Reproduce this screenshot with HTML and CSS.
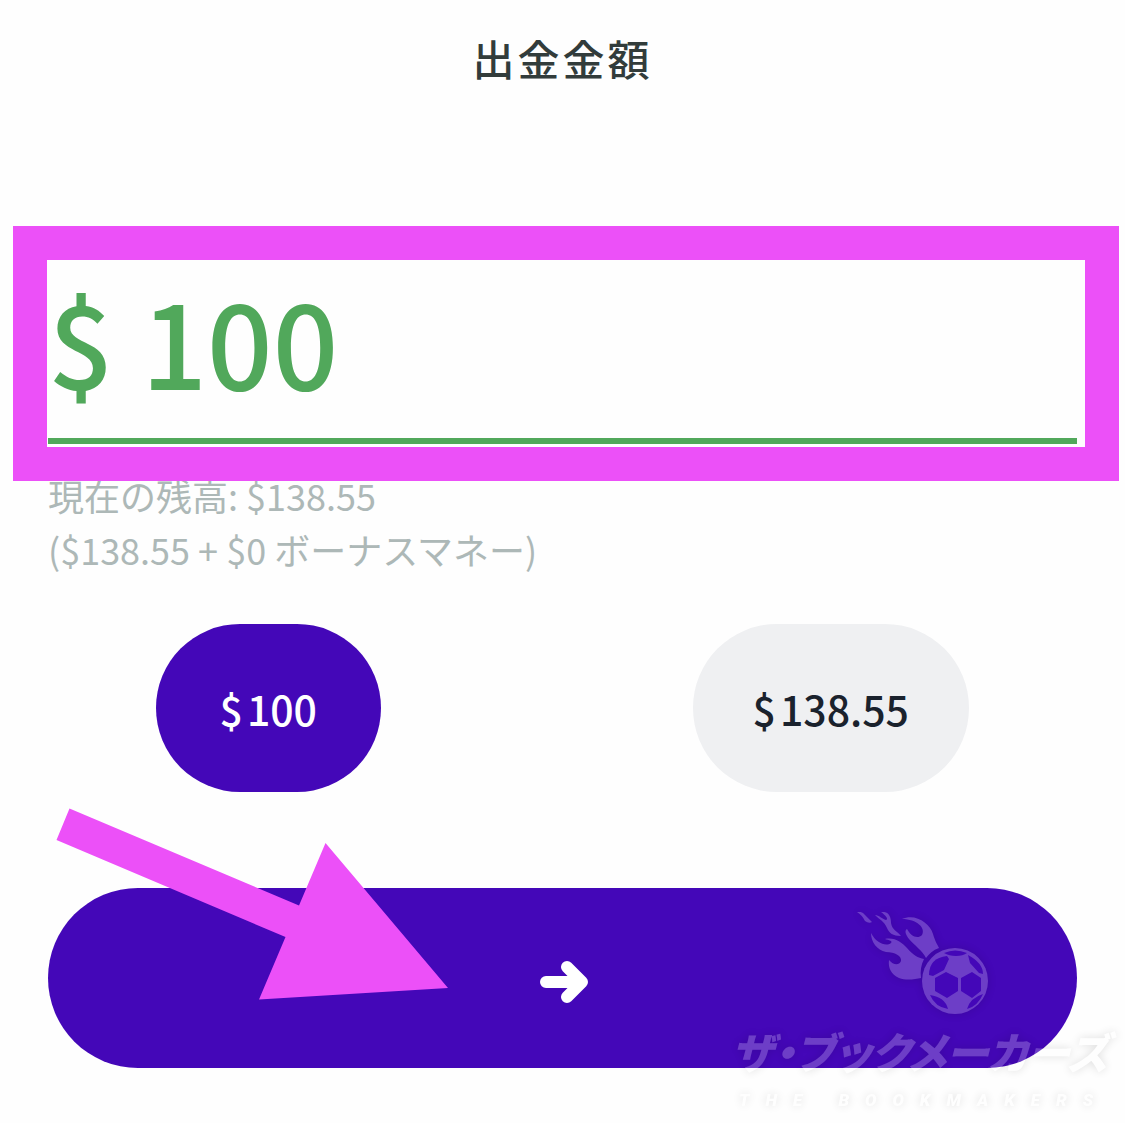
FILE: index.html
```html
<!DOCTYPE html>
<html lang="ja">
<head>
<meta charset="utf-8">
<meta name="viewport" content="width=device-width, initial-scale=1">
<title>出金金額</title>
<link rel="stylesheet" href="styles.css">
</head>
<body>
<main class="page">
  <h1 class="title">出金金額</h1>
  <form class="form">
    <div class="amount">
      <label class="currency" for="amount">$</label>
      <input class="amount-input" id="amount" type="text" inputmode="decimal" value="100" autocomplete="off">
      <div class="highlight"></div>
    </div>
    <p class="balance">現在の残高: $138.55<br>($138.55 + $0 ボーナスマネー)</p>
    <div class="presets">
      <button class="chip chip-active" type="button"><span>$</span><span>100</span></button>
      <button class="chip" type="button"><span>$</span><span>138.55</span></button>
    </div>
    <div class="submit-row">
      <button class="submit" type="submit" aria-label="次へ">
        <svg width="48" height="42" viewBox="0 0 48 42" fill="none" stroke="currentColor" stroke-width="12" stroke-linecap="round" stroke-linejoin="round"><path d="M6 21H42M27 6L42 21L27 36"/></svg>
      </button>
      <svg class="pointer" width="392" height="192" viewBox="0 0 392 192" aria-hidden="true"><path fill="#ec50f8" d="M13.500 .500L243 97.500L269.500 35L392 180L203 191.500L229.500 129L.500 32Z"/></svg>
      <div class="watermark">
        <svg class="watermark-mark" width="134" height="104" viewBox="0 0 134 104" aria-hidden="true">
          <g fill="#fff">
            <path d="M0 0Q5 -1 8 3L15 10Q12 12 8 9Q5 3 0 0Z"/>
            <path d="M18 3C22 3 25 7 29 8C32 7 28 3 24 0C32 -1 34 5 34 11C35 18 40 19 44 24C36 24 32 21 30 16C27 9 23 8 18 3Z"/>
            <path d="M45 7C58 1 73 11 76 22C78 29 80 32 82 36C76 38 72 42 69 46C66 39 57 33 52 27C49 23 47 19 50 17C53 23 60 28 65 23C69 16 60 7 45 7Z"/>
            <path d="M14 21C19 31 29 35 34 31C36 29 32 28 28 27C38 25 45 31 50 36C56 43 61 46 67 47C64 53 63 59 64 66C58 67 50 69 42 66C34 62 31 56 32 48C36 53 42 54 44 49C45 44 38 40 29 40C20 38 14 30 14 21Z"/>
          </g>
          <g transform="translate(98 69)">
            <circle r="33" fill="#fff"/>
            <g fill="#4407b8">
              <path d="M-11 -28Q0 -33 12 -28Q8 -25 1 -25Q-6 -25 -11 -28Z"/>
              <path d="M-26 -6Q-26 -23 -8 -25L-6 -22L-11 -11L-22 -5Z"/>
              <path d="M13 -26Q28 -18 28 -7L24 -8L15 -18Z"/>
              <path d="M-20 -3L-9 -9L3 -3V10L-8 17L-20 10Z"/>
              <path d="M6 -3L17 -9L26 -3V10L17 17L6 10Z"/>
              <path d="M-25 14Q-10 16 -7 28Q-20 26 -25 14Z"/>
              <path d="M28 13Q23 25 12 28Q15 17 28 13Z"/>
            </g>
          </g>
        </svg>
        <span class="watermark-name">ザ・ブックメーカーズ</span>
        <span class="watermark-sub">THE BOOKMAKERS</span>
      </div>
    </div>
  </form>
</main>
</body>
</html>
```
FILE: styles.css
```css
* {
  box-sizing: border-box;
}

body {
  margin: 0;
  background: #fefefe;
  color: #323c3b;
  font-family: "Noto Sans CJK JP", "Noto Sans", sans-serif;
}

.page {
  overflow: hidden;
  padding-bottom: 55px;
}

.title {
  margin: 0;
  padding: 28px 48px 0;
  font-size: 42px;
  line-height: 60px;
  font-weight: 500;
  letter-spacing: 3px;
  text-align: center;
}

.amount {
  position: relative;
  display: flex;
  gap: 28px;
  height: 184px;
  margin: 172px 48px 0;
  border-bottom: 6px solid #51a85b;
  color: #51a85b;
  font-size: 115px;
  line-height: 160px;
  font-weight: 500;
}

.amount-input {
  flex: 1;
  min-width: 0;
  height: 160px;
  padding: 0;
  border: 0;
  outline: 0;
  background: transparent;
  color: inherit;
  font: inherit;
}

.highlight {
  position: absolute;
  inset: -34px -42px -43px -35px;
  border: 34px solid #ec50f8;
  pointer-events: none;
}

.balance {
  margin: 24px 48px 0;
  color: #adb8b7;
  font-size: 36px;
  line-height: 54px;
}

.presets {
  display: grid;
  grid-template-columns: 1fr 1fr;
  gap: 26px;
  margin-top: 48px;
  padding-right: 26px;
  justify-items: center;
}

.chip {
  display: flex;
  align-items: center;
  gap: 4px;
  height: 168px;
  padding: 0 60px;
  border: 0;
  border-radius: 84px;
  background: #eff0f2;
  color: #1a222d;
  font: inherit;
  font-size: 41px;
  font-weight: 500;
}

.chip-active {
  padding: 0 64px;
  background: #4407b8;
  color: #fff;
}

.submit-row {
  position: relative;
  margin-top: 96px;
  padding: 0 48px;
}

.submit {
  display: flex;
  align-items: center;
  justify-content: center;
  width: 100%;
  height: 180px;
  padding: 8px 0 0 2px;
  border: 0;
  border-radius: 90px;
  background: #4407b8;
  color: #fff;
}

.pointer {
  position: absolute;
  left: 56px;
  top: -80px;
  pointer-events: none;
}

.watermark {
  position: absolute;
  top: 24px;
  right: 12px;
  width: 382px;
  display: flex;
  flex-direction: column;
  color: #fff;
  white-space: nowrap;
  opacity: 0.22;
  filter: drop-shadow(0 0 5px rgba(0, 0, 0, 0.6));
  pointer-events: none;
}

.watermark-mark {
  margin-left: 126px;
}

.watermark-name {
  font-size: 43px;
  line-height: 68px;
  font-weight: 900;
  font-style: italic;
  font-feature-settings: "palt";
}

.watermark-sub {
  padding-left: 8px;
  font-family: Roboto, sans-serif;
  font-size: 17px;
  line-height: 32px;
  font-weight: 900;
  font-style: italic;
  letter-spacing: 16px;
}
```
